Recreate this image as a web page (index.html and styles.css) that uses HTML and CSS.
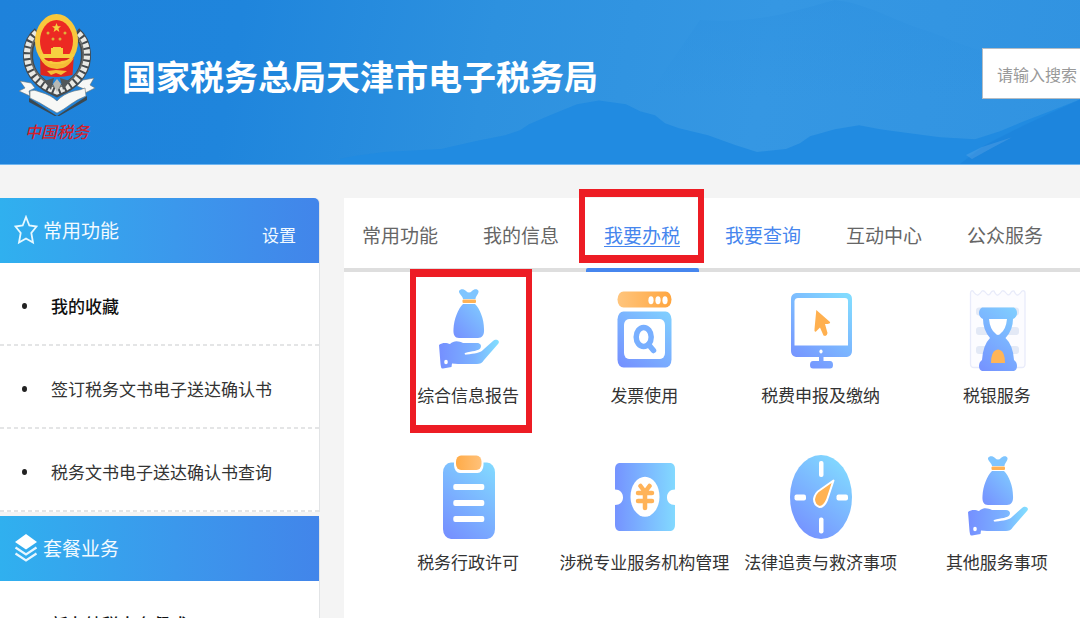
FILE: index.html
```html
<!DOCTYPE html>
<html lang="zh-CN">
<head>
<meta charset="utf-8">
<meta name="viewport" content="width=device-width, initial-scale=1">
<title>国家税务总局天津市电子税务局</title>
<link rel="stylesheet" href="styles.css">
</head>
<body>
<svg class="defs" aria-hidden="true">
  <defs>
    <linearGradient id="far-hill" x1="0" y1="0" x2="0" y2="1"><stop offset="0" stop-color="#2b8fdf" stop-opacity=".4"/><stop offset=".6" stop-color="#2b8fdf" stop-opacity="0"/></linearGradient>
    <linearGradient id="blue" gradientUnits="userSpaceOnUse" x1="18" y1="78" x2="74" y2="10"><stop offset="0" stop-color="#758fff"/><stop offset="1" stop-color="#82dbff"/></linearGradient>
    <linearGradient id="blue-flat" x1="0" y1="0" x2="1" y2="0"><stop offset="0" stop-color="#7593ff"/><stop offset="1" stop-color="#82d9ff"/></linearGradient>
    <linearGradient id="hand-blue" x1="0" y1="0" x2="1" y2="0"><stop offset="0" stop-color="#758fff"/><stop offset=".6" stop-color="#7bb2ff"/><stop offset="1" stop-color="#82dfff"/></linearGradient>
    <linearGradient id="bag-blue" x1="0" y1="1" x2="1" y2="0"><stop offset="0" stop-color="#758fff"/><stop offset="1" stop-color="#80ccff"/></linearGradient>
    <linearGradient id="orange" x1="0" y1="0" x2="1" y2="0"><stop offset="0" stop-color="#ffc57d"/><stop offset="1" stop-color="#ffa63f"/></linearGradient>
    <linearGradient id="orange-clip" x1="0" y1="0" x2="1" y2="0"><stop offset="0" stop-color="#ffab48"/><stop offset="1" stop-color="#ffc179"/></linearGradient>
    <symbol id="money-bag" viewBox="0 0 90 84">
      <path fill="#7fc5ff" d="M40 11C40 8 35.500 6 36 3C37.500 .5 41 1 43 3C45 5 47 5 49 3C51 1 54.500 .5 55.500 3C56 6 52.500 8 52.500 11Z"/>
      <rect fill="#ffb255" x="39.500" y="11.500" width="13.500" height="3.500" rx="1"/>
      <path fill="url(#bag-blue)" d="M40 16H52C57 21 61 31 61 41C61.500 47 59 50 55 50H36C32 50 30 47 30.500 41C31 31 35 21 40 16Z"/>
      <path fill="url(#hand-blue)" d="M16 57C20 54 24 55 27 56C31 52 36 53 40 55H53C57 54.500 59 57 57.500 60C56 63 49 63 42 65C41 66 42 67 44 66.500C51 65.500 58 65 61 61L70 53C73 50 78 53 75 56L61 72C59 75 57 76 54 76H35L29 75.500L28.500 79L20 80.500C18 81 18 79 17.500 76Z"/>
      <ellipse fill="#fff" cx="23" cy="74" rx="1.800" ry="2.300"/>
    </symbol>
  </defs>
</svg>

<header class="site-header">
  <svg class="hills" viewBox="0 0 1080 165" preserveAspectRatio="none" aria-hidden="true">
    <path fill="url(#far-hill)" d="M700 20C760 24 790 12 835 0C870 4 895 22 930 32C970 48 1000 62 1080 68V165H600Z"/>
    <path fill="#218be1" d="M340 160L354 157L385 153L441 150L475 142L505 136L520 131L529 125L550 116L577 105L599 101L626 105L640 112L655 116L665 124L679 129L708 136L735 146L757 153L786 150L800 144L810 137L835 130L859 126L880 130L902 133L940 138L975 140L1000 132L1024 122L1050 112L1080 100V165H340Z"/>
    <path fill="#1d83dc" opacity=".7" d="M960 165L985 146L1024 126L1080 100V165Z"/>
    <path fill="#6fb1e9" opacity=".3" d="M966 156L982 148L1012 138L990 150L972 160Z"/>
  </svg>
  <div class="brand">
    <div class="emblem">
      <svg class="emblem-art" viewBox="0 0 80 104" role="img" aria-label="税务徽标">
        <g fill="none">
          <path stroke="#454a4e" stroke-width="10" d="M21 20C9 30 8 50 17 63C24 73 33 77 40 80C47 77 56 73 63 63C72 50 71 30 59 20"/>
          <path stroke="#e9e9e5" stroke-width="7" stroke-dasharray="4 2" d="M20 21C8 31 8 49 16 62C23 72 32 76 40 79C48 76 57 72 64 62C72 49 72 31 60 21"/>
          <path stroke="#686a68" stroke-width="1.500" d="M22 22C11 32 12 49 19 60C26 70 34 74 40 76C46 74 54 70 61 60C68 49 69 32 58 22"/>
        </g>
        <path fill="#df261f" d="M23 43H57L55.500 63Q40 67 23.500 63Z"/>
        <ellipse cx="39.500" cy="29" rx="21.500" ry="27" fill="#f8c83d"/>
        <ellipse cx="39.500" cy="29" rx="16.500" ry="21" fill="#ec2923"/>
        <path fill="#f6d040" d="M39.500 11l1.300 3.300h3.200l-2.600 2.200 1 3.500-2.900-2-2.900 2 1-3.500-2.600-2.200h3.200ZM34 36h2v-1h8v1h2v6h11l-2 5H25l-2-5h11Z"/>
        <g fill="#dfb13a"><circle cx="31" cy="21" r="1.500"/><circle cx="48" cy="21" r="1.500"/><circle cx="36" cy="27" r="1.500"/><circle cx="43" cy="27" r="1.500"/></g>
        <path fill="#d9271c" d="M27 46H53Q48 50 44 48Q40 46 36 48Q30 51 27 46Z"/>
        <path fill="#f5bd35" d="M23 46Q30 50 34 52H46Q50 50 57 46Q52 54 46 56L40 57L34 56Q27 54 23 46ZM30 59L39 58L50 59L44 63L39 61L34 63Z"/>
        <path fill="#51575a" d="M27 69L37 66L34 78ZM53 69L43 66L46 78Z"/>
        <path fill="#b7b9b5" d="M36 72L40 67L44 72L40 80Z"/>
        <path fill="#3b4850" d="M12 86L40 104L70 84L70 88L44 103Q40 106 36 103L12 90Z"/>
        <g fill="#f7f8f6" stroke="#65747b" stroke-width=".6">
          <path d="M3 69L14 71L18 76L12 79L13 84L2 79L8 76ZM77 66L66 68L60 74L67 77L68 81L78 76L73 73Z"/>
          <path d="M13 79Q17 77 23 80Q34 83 40 89Q46 82 57 79Q64 78 68 76L69 84Q61 87 54 92Q46 98 40 101Q31 96 23 91L13 86Z"/>
        </g>
      </svg>
      <span class="emblem-caption">中国税务</span>
    </div>
    <h1 class="site-title">国家税务总局天津市电子税务局</h1>
  </div>
  <input class="search" type="text" aria-label="搜索" placeholder="请输入搜索">
</header>

<div class="page">
  <aside class="sidebar">
    <section class="panel">
      <div class="panel-head">
        <svg class="panel-icon" viewBox="0 0 24 30" aria-hidden="true"><path fill="none" stroke="#e6f8ff" stroke-width="1.800" d="M12 2L15.300 10.500L22.500 11.500L17.300 18L19 27.500L12 23.500L5 27.500L6.700 18L1.500 11.500L8.700 10.500Z"/></svg>
        <h2 class="panel-title">常用功能</h2>
        <a class="panel-setting" href="#settings">设置</a>
      </div>
      <ul class="links">
        <li class="link-row"><a class="link strong" href="#favorites">我的收藏</a></li>
        <li class="link-row"><a class="link" href="#sign">签订税务文书电子送达确认书</a></li>
        <li class="link-row"><a class="link" href="#query">税务文书电子送达确认书查询</a></li>
      </ul>
    </section>
    <section class="panel">
      <div class="panel-head square">
        <svg class="panel-icon" viewBox="0 0 24 30" aria-hidden="true"><path fill="#fff" d="M12 1L23 9L12 16.500L1 9Z"/><path fill="none" stroke="#e6f6ff" stroke-width="2.200" d="M1.500 14.500L12 21.500L22.500 14.500M1.500 20.500L12 27.500L22.500 20.500"/></svg>
        <h2 class="panel-title">套餐业务</h2>
      </div>
      <ul class="links">
        <li class="link-row"><a class="link strong" href="#new">新办纳税人套餐式</a></li>
      </ul>
    </section>
  </aside>

  <main class="content">
    <nav class="tabs">
      <a class="tab" href="#common">常用功能</a>
      <a class="tab" href="#info">我的信息</a>
      <a class="tab active" href="#handle">我要办税</a>
      <a class="tab visited" href="#inquire">我要查询</a>
      <a class="tab" href="#interact">互动中心</a>
      <a class="tab" href="#public">公众服务</a>
    </nav>
    <div class="services">
      <a class="service marked" href="#report">
        <svg class="service-icon" viewBox="0 0 90 84" aria-hidden="true"><use href="#money-bag"/></svg>
        <span>综合信息报告</span>
      </a>
      <a class="service" href="#invoice">
        <svg class="service-icon" viewBox="0 0 90 84" aria-hidden="true">
          <rect fill="url(#orange)" x="18.500" y="3.500" width="54" height="16" rx="6" ry="8"/>
          <g fill="#fff"><ellipse cx="52" cy="12.300" rx="2.600" ry="4"/><ellipse cx="59" cy="12.300" rx="2.600" ry="4"/><ellipse cx="66" cy="12.300" rx="2.600" ry="4"/></g>
          <rect fill="url(#blue)" x="18.500" y="23.500" width="54" height="56" rx="6" ry="8"/>
          <rect fill="#fff" x="25" y="31" width="41" height="40" rx="5" ry="6"/>
          <ellipse cx="44.700" cy="49" rx="7.500" ry="9.500" fill="none" stroke="#78afff" stroke-width="5.500"/>
          <path d="M49.500 56.500L54.500 62.500" stroke="#78afff" stroke-width="5.500" stroke-linecap="round"/>
        </svg>
        <span>发票使用</span>
      </a>
      <a class="service" href="#declare">
        <svg class="service-icon" viewBox="0 0 90 84" aria-hidden="true">
          <path fill="url(#blue)" fill-rule="evenodd" d="M20 5H71Q76 6 76 11V63Q76 68 71 69H47.500V73H54Q57 73 57 77Q57 80.500 54 80.500H37Q34 80.500 34 77Q34 73 37 73H43V69H20Q15 68 15 63V11Q15 6 20 5ZM22 10Q19 10 18.500 13V57.500H72V13Q72 10 69 10Z"/>
          <ellipse fill="#fff" cx="45" cy="63.500" rx="1.600" ry="2"/>
          <path fill="#ffb04f" d="M40.300 22L54 34Q55 36 49 36L51.500 45Q51 49 47.500 47.500L44 39.500L40 43.500Q38 44.500 38.500 41Z"/>
        </svg>
        <span>税费申报及缴纳</span>
      </a>
      <a class="service" href="#bank">
        <svg class="service-icon" viewBox="0 0 90 84" aria-hidden="true">
          <path fill="#fcfcff" stroke="#e8ebfa" stroke-width="1.300" d="M18.500 5Q19 2 21 3Q24 7.500 26 7Q28 6 30 3Q32 2 34 5Q36 8 38 6Q40 2 42 3Q44 7.500 46 7Q48 6 50 3Q52 2 54 5Q56 8 58 6Q60 2 62 3Q64 7.500 66 7Q68 6 70 3Q73 2 73 5V76Q73 79.500 70 79.500H22Q18.500 79.500 18.500 76Z"/>
          <g fill="#e3e9f6"><rect x="24" y="19.500" width="43" height="8" rx="3"/><rect x="24" y="39" width="43" height="8" rx="3"/><rect x="24" y="58" width="43" height="8" rx="3"/></g>
          <path fill="url(#blue)" d="M30 19.500H62Q65 21 65 25Q65 29 61 31Q61 42 53.500 50Q61 57 62 72Q65 74 65 78Q65 82 62 83H30Q27 82 27 78Q27 74 30 72Q31 57 38 50Q31 42 31 31Q27 29 27 25Q27 21 30 19.500Z"/>
          <path fill="#fff" d="M37 31H55Q54 41 49 45Q46 49 43 45Q38 41 37 31Z"/>
          <path fill="#ffb558" d="M39 75Q39 64 44 62Q46 61 48 62Q53 64 53 75Z"/>
        </svg>
        <span>税银服务</span>
      </a>
      <a class="service" href="#permit">
        <svg class="service-icon" viewBox="0 0 90 84" aria-hidden="true">
          <rect fill="url(#blue)" x="20" y="7.500" width="52" height="76.500" rx="8" ry="10"/>
          <rect fill="#fff" x="31" y="-2" width="29.500" height="20" rx="6" ry="8"/>
          <rect fill="url(#orange-clip)" x="33" y=".5" width="25.500" height="14.500" rx="5" ry="6"/>
          <g fill="#fff"><rect x="30.300" y="29" width="31" height="6" rx="2"/><rect x="30.300" y="45" width="31" height="6" rx="2"/><rect x="30.300" y="61" width="31" height="6" rx="2"/></g>
        </svg>
        <span>税务行政许可</span>
      </a>
      <a class="service" href="#agency">
        <svg class="service-icon" viewBox="0 0 90 84" aria-hidden="true">
          <path fill="url(#blue-flat)" d="M20 8H72Q76 9 76 14V34.500C71 34.500 68 38 68 42.500C68 47 71 50 76 50V70Q76 75 72 76H20Q16 75 16 70V50C21 50 24 47 24 42.500C24 38 21 34.500 16 34.500V14Q16 9 20 8Z"/>
          <ellipse fill="#fff" cx="46" cy="41.700" rx="14.500" ry="20"/>
          <path fill="none" stroke="#ffb358" stroke-width="4.500" stroke-linecap="round" stroke-linejoin="round" d="M41.500 31L46 37L50.500 31M39 38H53M39 46H53M46 38V53"/>
        </svg>
        <span>涉税专业服务机构管理</span>
      </a>
      <a class="service" href="#relief">
        <svg class="service-icon" viewBox="0 0 90 84" aria-hidden="true">
          <ellipse fill="url(#blue)" cx="45" cy="42" rx="31" ry="42"/>
          <g fill="#fff"><rect x="43" y="6" width="4.500" height="16" rx="2"/><rect x="43" y="62.500" width="4.500" height="16" rx="2"/><rect x="18.500" y="39.500" width="11.500" height="6" rx="2"/><rect x="60.500" y="39.500" width="11.500" height="6" rx="2"/></g>
          <path fill="#ffb252" stroke="#fff" stroke-width="2" stroke-linejoin="round" d="M57.500 25.500L51 45Q48 52 43.500 52Q38 50 38 44Q39 38 44 35Z"/>
        </svg>
        <span>法律追责与救济事项</span>
      </a>
      <a class="service" href="#other">
        <svg class="service-icon" viewBox="0 0 90 84" aria-hidden="true"><use href="#money-bag"/></svg>
        <span>其他服务事项</span>
      </a>
    </div>
  </main>
</div>
</body>
</html>
```

FILE: styles.css
```css
* {
  box-sizing: border-box;
}

body {
  margin: 0;
  height: 100vh;
  overflow: hidden;
  background: #f4f4f4;
  color: #333;
  font-family: "Noto Sans CJK SC", "Liberation Sans", sans-serif;
  font-size: 17px;
  line-height: 24px;
}

a {
  color: inherit;
  text-decoration: none;
}

.defs {
  position: absolute;
  width: 0;
  height: 0;
}

/* Header */
.site-header {
  position: relative;
  display: flex;
  align-items: flex-start;
  justify-content: space-between;
  padding: 12px 0 18px 17px;
  overflow: hidden;
  border-bottom: 1px solid #6fb5f0;
  background: linear-gradient(100deg, #1e82db 0%, #1f85dc 22%, #2d91df 45%, #3597e3 70%, #3193e1 100%);
}

.hills {
  position: absolute;
  inset: 0;
  width: 100%;
  height: 100%;
}

.brand {
  position: relative;
  display: flex;
  align-items: center;
  gap: 25px;
}

.emblem {
  display: flex;
  flex-direction: column;
  align-items: center;
}

.emblem-art {
  display: block;
  width: 80px;
  height: 104px;
}

.emblem-caption {
  color: #d3202b;
  font-size: 16px;
  font-style: italic;
  font-weight: 500;
  line-height: 30px;
}

.site-title {
  margin: 0;
  padding-bottom: 6px;
  color: #fff;
  font-size: 34px;
  font-weight: 700;
  line-height: 48px;
  white-space: nowrap;
}

.search {
  position: relative;
  flex: none;
  width: 102px;
  height: 51px;
  margin: 36px -4px 0 0;
  padding: 0 0 0 14px;
  border: 1px solid #b4bcc4;
  border-radius: 0;
  outline: 0;
  background: #fff;
  color: #333;
  font: inherit;
  font-size: 16px;
}

.search::placeholder {
  color: #999;
  opacity: 1;
}

/* Page columns */
.page {
  display: grid;
  grid-template-columns: 320px 1fr;
  gap: 24px;
  padding-top: 33px;
}

.sidebar {
  display: flex;
  flex-direction: column;
  gap: 4px;
}

.panel {
  border-right: 1px solid #e2e4e6;
  border-radius: 0 5px 0 0;
  background: #fff;
}

.panel-head {
  display: flex;
  align-items: center;
  height: 65px;
  padding: 0 23px 2px 14px;
  border-radius: 0 5px 0 0;
  background: linear-gradient(90deg, #30b0ef, #3b98ec 55%, #4285ea);
  color: #f2faff;
}

.panel-head.square {
  border-radius: 0;
}

.panel-icon {
  width: 24px;
  height: 30px;
  margin-right: 5px;
}

.panel-title {
  margin: 0;
  font-size: 19px;
  font-weight: 400;
}

.panel-setting {
  margin-left: auto;
  padding-top: 10px;
}

.links {
  margin: 0;
  padding: 0;
  list-style: none;
}

.link-row {
  display: flex;
  align-items: center;
  height: 83px;
  padding: 4px 0 2px 22px;
  background: repeating-linear-gradient(90deg, #e4e5e6 0 4px, transparent 4px 7px) left bottom / 100% 2px no-repeat;
}

.link-row::before {
  content: "";
  width: 5px;
  height: 6px;
  margin-right: 24px;
  border-radius: 50%;
  background: #222;
}

.link.strong {
  color: #111;
  font-weight: 500;
}

/* Tabs */
.content {
  min-width: 0;
  background: #fff;
}

.tabs {
  display: flex;
  height: 74px;
  border-bottom: 4px solid #dedede;
}

.tab {
  position: relative;
  flex: none;
  width: 121px;
  padding: 25px 0 0 18px;
  color: #666;
  font-size: 19px;
}

.tab.visited,
.tab.active {
  color: #4686ee;
}

.tab.active {
  text-decoration: underline;
  text-underline-offset: 3px;
}

.tab.active::before {
  content: "";
  position: absolute;
  right: 8px;
  bottom: -4px;
  left: 0;
  height: 4px;
  border-radius: 2px 2px 0 0;
  background: #4686ee;
}

.tab.active::after,
.service.marked::after {
  content: "";
  position: absolute;
  border: 6px solid #ed1c24;
  border-width: 8px 6px;
}

.tab.active::after {
  inset: -9px 3px 5px -7px;
}

/* Services */
.services {
  display: grid;
  grid-template-columns: repeat(4, 1fr);
  row-gap: 48px;
  margin-right: -5px;
  padding: 16px 0 32px 36px;
}

.service {
  position: relative;
  display: flex;
  flex-direction: column;
  align-items: center;
  gap: 11px;
  white-space: nowrap;
}

.service-icon {
  width: 90px;
  height: 84px;
}

.service.marked::after {
  inset: -19px 24px -26px 30px;
}
```
